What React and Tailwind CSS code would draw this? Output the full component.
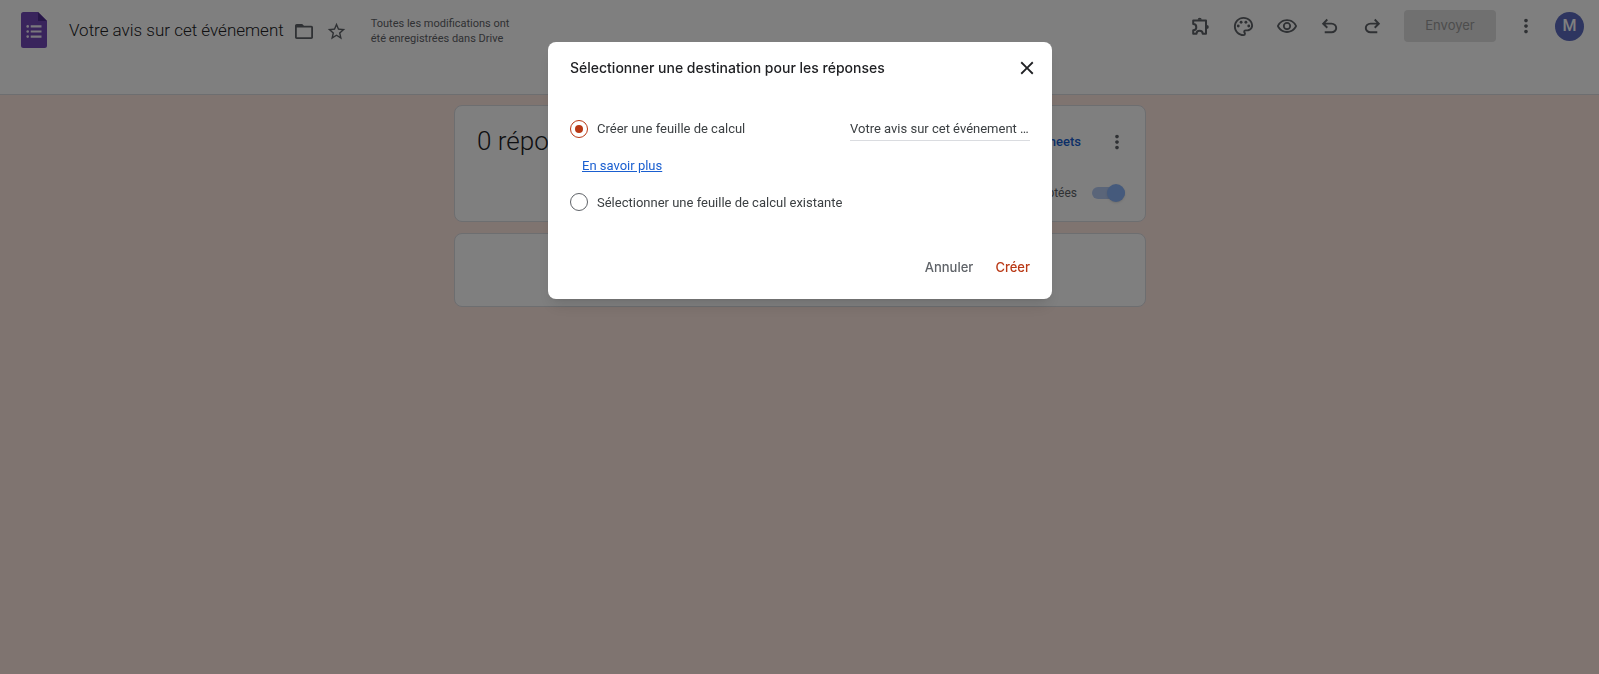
import { MdOutlinePalette, MdOutlineRemoveRedEye, MdMoreVert, MdStarBorder, MdClose } from "react-icons/md";

function FormsLogo() {
  return (
    <svg viewBox="0 0 26 36" className="h-9 w-[26px]" aria-hidden="true">
      <path d="M2.500 0H17l9 9v24.500a2.500 2.500 0 0 1-2.500 2.500h-21A2.500 2.500 0 0 1 0 33.500v-31A2.500 2.500 0 0 1 2.500 0z" fill="#7248b9" />
      <path d="M17 0l9 9h-9z" fill="#4f2d91" />
      <g fill="#f4f0fa">
        <circle cx="6.700" cy="14.400" r="1.300" />
        <circle cx="6.700" cy="19.500" r="1.300" />
        <circle cx="6.700" cy="24.600" r="1.300" />
        <path d="M9.700 13.300h10.800v2.200H9.700zM9.700 18.400h10.800v2.200H9.700zM9.700 23.500h10.800v2.200H9.700z" />
      </g>
    </svg>
  );
}

function FolderIcon() {
  return (
    <svg viewBox="0 0 18 15" className="h-[15px] w-[18px]" aria-hidden="true">
      <path fillRule="evenodd" fill="#5f6368" d="M1.700 0h5.500l1.800 1.800h7.300c1 0 1.700.8 1.700 1.700v9.800c0 1-.8 1.700-1.700 1.700H1.700C.8 15 0 14.200 0 13.300V1.700C0 .8.800 0 1.700 0zM1.800 3.600v9.600h14.400V3.600z" />
    </svg>
  );
}

function PuzzleIcon() {
  return (
    <svg viewBox="0 0 18 18" className="size-[18px]" aria-hidden="true">
      <path d="M1.200 3.500H14V16.800H10.700A3.100 3.100 0 0 0 4.500 16.800H1.200V13.300A3.100 3.100 0 0 0 1.200 7.100Z" fill="none" stroke="currentColor" strokeWidth="2" strokeLinejoin="round" />
      <path d="M5.700 2.800a2 2 0 0 1 4 0zM14.800 8.100a2 2 0 0 1 0 4z" fill="currentColor" />
    </svg>
  );
}

function ArrowIcon({ redo }) {
  return (
    <svg viewBox="0 -960 960 960" className="size-[23px]" fill="currentColor" aria-hidden="true">
      {redo ? (
        <path d="M396-200q-97 0-167-63t-70-157q0-94 70-157t167-63h252L544-744l56-56 200 200-200 200-56-56 104-104H396q-63 0-109.500 40T240-420q0 60 46.500 100T396-280h284v80H396Z" />
      ) : (
        <path d="M280-200v-80h284q63 0 109.500-40T720-420q0-60-46.500-100T564-560H312l104 104-56 56-200-200 200-200 56 56-104 104h252q97 0 167 63t70 157q0 94-70 157t-167 63H280Z" />
      )}
    </svg>
  );
}

function IconButton({ label, children }) {
  return (
    <button type="button" aria-label={label} className="flex size-[43px] items-center justify-center text-[#5f6368]">
      {children}
    </button>
  );
}

function Header() {
  return (
    <header className="flex h-[95px] items-start border-b border-[#dadce0] bg-white">
      <div className="flex h-[60px] items-center pl-[21px]">
        <FormsLogo />
        <h1 className="ml-[22px] mt-px text-[17px] font-light text-[#202124]">Votre avis sur cet événement</h1>
        <button type="button" aria-label="Déplacer" className="ml-[11px] mt-[3px]"><FolderIcon /></button>
        <button type="button" aria-label="Suivre" className="ml-[13px] mt-[3px] text-[#5f6368]"><MdStarBorder size={21} /></button>
        <p className="ml-6 mt-[2px] w-[150px] text-[11px] leading-[15px] text-[#5f6368]">Toutes les modifications ont été enregistrées dans Drive</p>
      </div>
      <div className="ml-auto flex h-[52px] items-center pr-[15px]">
        <IconButton label="Modules complémentaires"><PuzzleIcon /></IconButton>
        <IconButton label="Personnaliser le thème"><MdOutlinePalette size={23} /></IconButton>
        <IconButton label="Aperçu"><MdOutlineRemoveRedEye size={22} /></IconButton>
        <IconButton label="Annuler la modification"><ArrowIcon /></IconButton>
        <IconButton label="Rétablir"><ArrowIcon redo /></IconButton>
        <button type="button" className="ml-[10px] h-8 w-[92px] rounded bg-[#e0e0e0] font-['Inter',sans-serif] text-[13px] text-[#9a9a9a]">Envoyer</button>
        <button type="button" aria-label="Plus" className="ml-[19px] mr-[18px] text-[#5f6368]"><MdMoreVert size={22} /></button>
        <button type="button" aria-label="Compte" className="size-[29px] rounded-full bg-[#5c6bc0] text-base font-medium text-white">M</button>
      </div>
    </header>
  );
}

function Responses() {
  return (
    <main className="flex justify-center pl-px pt-[10px]">
      <div className="flex w-[692px] max-w-full flex-col gap-[11px]">
        <section className="h-[117px] rounded-lg border border-[#dadce0] bg-white pl-[22px] pr-5">
          <div className="flex h-[71px] items-center">
            <h2 className="text-[26px] font-light text-[#202124]">0 réponse</h2>
            <a href="#sheets" className="ml-auto text-[13px] font-medium text-[#1a5fd0]">Afficher dans Sheets</a>
            <button type="button" aria-label="Options des réponses" className="ml-[25px] mr-[-3px] text-[#5f6368]"><MdMoreVert size={22} /></button>
          </div>
          <label className="flex h-8 items-center justify-end gap-[15px] text-xs text-[#5f6368]">
            Réponses acceptées
            <span className="relative flex h-[18px] w-[33px] items-center">
              <input type="checkbox" defaultChecked className="h-3 w-full appearance-none rounded-full bg-[#b5cbf3]" />
              <span className="pointer-events-none absolute right-0 size-[18px] rounded-full bg-[#8ab4f8] shadow" />
            </span>
          </label>
        </section>
        <section className="h-[74px] rounded-lg border border-[#dadce0] bg-white" />
      </div>
    </main>
  );
}

const radio = "grid size-[18px] shrink-0 appearance-none place-items-center rounded-full border border-[#5f6368] checked:border-[#b93815] checked:before:size-2 checked:before:rounded-full checked:before:bg-[#b93815] checked:before:content-['']";

function DestinationDialog() {
  return (
    <div className="fixed inset-0 flex items-start justify-center bg-black/50 pl-px pt-[42px]">
      <form role="dialog" aria-labelledby="dialog-title" onSubmit={(e) => e.preventDefault()} className="w-[504px] max-w-full rounded-lg bg-white px-[22px] pb-[15px] text-[13px] text-[#3c4043] shadow-lg">
        <div className="flex h-[51px] items-center justify-between">
          <h2 id="dialog-title" className="font-['Inter',sans-serif] text-sm font-medium text-[#202124]">Sélectionner une destination pour les réponses</h2>
          <button type="button" aria-label="Fermer" className="-mr-2 text-[#202124]"><MdClose size={22} /></button>
        </div>
        <div className="mt-[19px] flex h-[34px] items-center justify-between">
          <label className="flex items-center gap-[9px]">
            <input type="radio" name="destination" defaultChecked className={radio} />
            Créer une feuille de calcul
          </label>
          <input aria-label="Nom de la feuille de calcul" defaultValue="Votre avis sur cet événement (réponses)" className="h-6 w-[180px] text-ellipsis border-b border-[#dadce0] bg-transparent outline-none" />
        </div>
        <a href="#aide" className="ml-3 mt-[10px] inline-block text-[#1a5fd0] underline">En savoir plus</a>
        <label className="mt-[17px] flex w-fit items-center gap-[9px]">
          <input type="radio" name="destination" className={radio} />
          Sélectionner une feuille de calcul existante
        </label>
        <div className="mt-10 flex h-8 items-center justify-end gap-[22px] font-['Inter',sans-serif] text-[13px] font-medium">
          <button type="button" className="text-[#5f6368]">Annuler</button>
          <button type="submit" className="text-[#b93815]">Créer</button>
        </div>
      </form>
    </div>
  );
}

export default function App() {
  return (
    <div className="min-h-screen bg-[#ffe8e0] font-['Roboto',sans-serif]">
      <Header />
      <Responses />
      <DestinationDialog />
    </div>
  );
}
